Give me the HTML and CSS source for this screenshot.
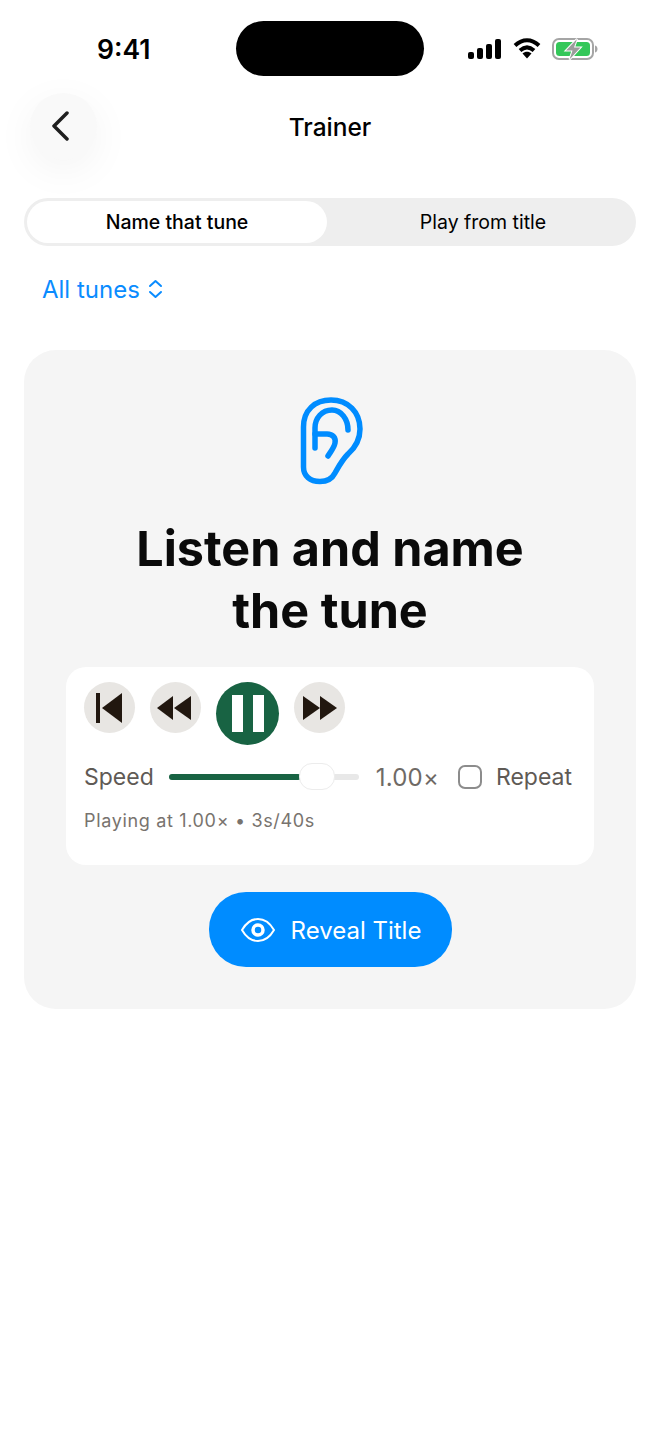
FILE: index.html
```html
<!DOCTYPE html>
<html lang="en">
<head>
    <meta charset="UTF-8">
    <meta name="viewport" content="width=device-width, initial-scale=1.0">
    <title>Trainer</title>
    <link rel="stylesheet" href="styles.css">
</head>
<body>
    <div class="screen">
        <div class="status-bar">
            <span class="clock">9:41</span>
            <div class="island"></div>
            <div class="status-icons">
                <svg width="34" height="20" viewBox="0 0 34 20"><rect x="0" y="13" width="6" height="7" rx="2"/><rect x="9" y="9" width="6" height="11" rx="2"/><rect x="18" y="5" width="6" height="15" rx="2"/><rect x="27" y="0" width="6" height="20" rx="2"/></svg>
                <svg width="28" height="21" viewBox="0 0 28 21"><path d="M2 7.500C9.500 .5 18.500 .5 26 7.500" class="wifi-arc"/><path d="M7 12.500C11.500 8.500 16.500 8.500 21 12.500" class="wifi-arc"/><path d="M9.500 15.500C12 13.200 16 13.200 18.500 15.500L14 20.500Z"/></svg>
                <svg width="46" height="22" viewBox="0 0 46 22">
                    <rect x="1" y="1" width="40" height="20" rx="6" class="batt-shell"/>
                    <path d="M43 7.500c2 .6 2.500 2 2.500 3.500s-.5 2.900-2.500 3.500z" fill="#a5a5a5"/>
                    <rect x="4" y="4" width="34" height="14" rx="3.500" fill="#34c759"/>
                    <path d="M25 1L14 12.500H20.500L17.500 21.500L28.500 9.500H22Z" class="batt-bolt"/>
                </svg>
            </div>
        </div>

        <header class="top-bar">
            <button class="back-btn" type="button">
                <svg width="20" height="30" viewBox="0 0 20 30"><path d="M16 2L3 15L16 28"/></svg>
            </button>
            <h1>Trainer</h1>
        </header>

        <div class="segments">
            <div class="segment active">Name that tune</div>
            <div class="segment">Play from title</div>
        </div>

        <div class="filter">
            All tunes
            <svg width="15" height="20" viewBox="0 0 15 20"><path d="M2 7L7.500 2L13 7M2 13L7.500 18L13 13"/></svg>
        </div>

        <section class="card">
            <svg class="ear" width="64" height="90" viewBox="0 0 64 90">
                <path d="M3.500 30C3.500 13 15 3 31 3C48 3 60 15 60 32C60 42 56 50 48 57C42 63 39 69 35 76C32 82 27 84.500 20 84.500C10 84.500 3.500 79 3.500 70Z"/>
                <path d="M15 51V31C15 21 22 13 32 13C41 13 48 22 48 33"/>
                <path d="M15 37H27C33 37 36 41 35 46C34 51 31 54 28 59"/>
            </svg>
            <h2>Listen and name<br>the tune</h2>

            <div class="player">
                <div class="controls">
                    <button class="ctl" type="button">
                        <svg width="30" height="30" viewBox="0 0 30 30"><rect x="1" y="0" width="4" height="30"/><path d="M27 0V30L7 15Z"/></svg>
                    </button>
                    <button class="ctl back-skip" type="button">
                        <svg width="36" height="26" viewBox="0 0 36 26"><path d="M17 1V25L1 13Z"/><path d="M35 1V25L18 13Z"/></svg>
                    </button>
                    <button class="ctl play" type="button">
                        <svg width="32" height="37" viewBox="0 0 32 37"><rect width="11" height="37"/><rect x="21" width="11" height="37"/></svg>
                    </button>
                    <button class="ctl" type="button">
                        <svg width="36" height="26" viewBox="0 0 36 26"><path d="M1 1V25L18 13Z"/><path d="M18 1V25L35 13Z"/></svg>
                    </button>
                </div>
                <div class="speed-row">
                    <span class="speed-label">Speed</span>
                    <div class="slider">
                        <div class="slider-fill"></div>
                        <div class="slider-thumb"></div>
                    </div>
                    <span class="speed-value">1.00×</span>
                    <span class="checkbox"></span>
                    <span class="speed-label">Repeat</span>
                </div>
                <div class="progress-text">Playing at 1.00× • 3s/40s</div>
            </div>

            <button class="reveal" type="button">
                <svg width="34" height="24" viewBox="0 0 34 24">
                    <path d="M1 12C5 5 11 1 17 1C23 1 29 5 33 12C29 19 23 23 17 23C11 23 5 19 1 12Z" class="eye-line"/>
                    <circle cx="17" cy="12" r="5" class="eye-line eye-iris"/>
                </svg>
                <span class="reveal-text">Reveal Title</span>
            </button>
        </section>
    </div>
</body>
</html>
```

FILE: styles.css
```css
body {
    font-family: Inter, 'Noto Sans', sans-serif;
    background-color: #fff;
    color: #0a0a0a;
    margin: 0;
    padding: 0;
}
button {
    font-family: inherit;
    border: none;
    padding: 0;
    cursor: pointer;
}
.screen {
    width: 660px;
    height: 1434px;
    padding: 21px 24px 0;
    box-sizing: border-box;
    overflow: hidden;
}

/* status bar */
.status-bar {
    display: flex;
    align-items: center;
    height: 55px;
}
.clock {
    width: 212px;
    box-sizing: border-box;
    padding-left: 73px;
    font-size: 26.500px;
    font-weight: 600;
    color: #000;
}
.island {
    width: 188px;
    height: 55px;
    background-color: #000;
    border-radius: 28px;
}
.status-icons {
    display: flex;
    align-items: center;
    gap: 11px;
    margin-left: 44px;
}
.status-icons svg {
    display: block;
}
.wifi-arc {
    fill: none;
    stroke: #000;
    stroke-width: 4;
}
.batt-shell {
    fill: none;
    stroke: #a5a5a5;
    stroke-width: 2;
}
.batt-bolt {
    fill: #9c9c9c;
    stroke: #fff;
    stroke-width: 2;
    paint-order: stroke;
}

/* header */
.top-bar {
    position: relative;
    display: flex;
    align-items: center;
    height: 67px;
    margin-top: 17px;
    padding-left: 6px;
}
.top-bar h1 {
    position: absolute;
    left: 0;
    right: 0;
    margin: 0;
    text-align: center;
    font-size: 24.500px;
    font-weight: 500;
    color: #000;
}
.back-btn {
    display: flex;
    align-items: center;
    justify-content: center;
    width: 67px;
    height: 67px;
    padding-right: 5px;
    padding-bottom: 2px;
    background-color: #f9f9f9;
    border-radius: 50%;
    box-shadow: 0 10px 40px rgba(0, 0, 0, 0.05);
}
.back-btn path {
    fill: none;
    stroke: #1f1f1f;
    stroke-width: 3.500;
    stroke-linecap: round;
    stroke-linejoin: round;
}

/* tabs */
.segments {
    display: flex;
    height: 48px;
    margin-top: 38px;
    padding: 3px;
    box-sizing: border-box;
    background-color: #eeeeee;
    border-radius: 24px;
}
.segment {
    width: 300px;
    display: flex;
    align-items: center;
    justify-content: center;
    border-radius: 21px;
    font-size: 19.500px;
    font-weight: 400;
    color: #000;
}
.segment + .segment {
    width: 306px;
    padding-left: 6px;
    box-sizing: border-box;
}
.segment.active {
    background-color: #fff;
    font-weight: 500;
}

.filter {
    display: flex;
    align-items: center;
    gap: 8px;
    margin-top: 28px;
    padding-left: 18px;
    height: 30px;
    font-size: 24px;
    color: #0a8cff;
}
.filter path {
    fill: none;
    stroke: #0a8cff;
    stroke-width: 2;
    stroke-linecap: round;
    stroke-linejoin: round;
}

/* main card */
.card {
    display: flex;
    flex-direction: column;
    align-items: center;
    height: 659px;
    margin-top: 46px;
    padding-top: 47px;
    box-sizing: border-box;
    background-color: #f5f5f5;
    border-radius: 32px;
}
.ear {
    display: block;
    margin-left: 3px;
}
.ear path {
    fill: none;
    stroke: #008cff;
    stroke-width: 5.500;
    stroke-linecap: round;
    stroke-linejoin: round;
}
.card h2 {
    margin: 31px 0 0;
    text-align: center;
    font-size: 48.500px;
    line-height: 62px;
    font-weight: 700;
    color: #0a0a0a;
}
.player {
    width: 528px;
    height: 198px;
    margin-top: 25px;
    padding: 15px 18px 0;
    box-sizing: border-box;
    background-color: #fff;
    border-radius: 20px;
}
.controls {
    display: flex;
    align-items: flex-start;
    gap: 15px;
}
.ctl {
    display: flex;
    align-items: center;
    justify-content: center;
    width: 51px;
    height: 51px;
    background-color: #e8e6e3;
    border-radius: 50%;
}
.ctl svg {
    fill: #21170f;
}
.back-skip {
    padding-right: 3px;
}
.ctl.play {
    width: 63px;
    height: 63px;
    background-color: #186343;
}
.ctl.play svg {
    fill: #fff;
}
.speed-row {
    display: flex;
    align-items: center;
    height: 28px;
    margin-top: 18px;
    font-size: 23px;
    color: #5f5a55;
}
.speed-label {
    display: block;
}
.slider {
    position: relative;
    width: 190px;
    height: 6px;
    margin-left: 15px;
    background-color: #e8e8e8;
    border-radius: 3px;
}
.slider-fill {
    width: 132px;
    height: 6px;
    background-color: #186343;
    border-radius: 3px;
}
.slider-thumb {
    position: absolute;
    left: 130px;
    top: -11px;
    width: 36px;
    height: 27px;
    box-sizing: border-box;
    background-color: #fff;
    border: 1px solid #ececec;
    border-radius: 13px;
}
.speed-value {
    margin-left: 17px;
    font-size: 24px;
    letter-spacing: 0.2px;
    color: #6f6a65;
}
.checkbox {
    width: 24px;
    height: 24px;
    margin: 0 14px 0 19px;
    box-sizing: border-box;
    border: 2px solid #8c8c8c;
    border-radius: 7px;
}
.progress-text {
    margin-top: 19px;
    font-size: 18px;
    letter-spacing: 0.66px;
    color: #78736e;
}
.reveal {
    display: flex;
    align-items: center;
    justify-content: center;
    gap: 16px;
    width: 243px;
    height: 75px;
    margin-top: 27px;
    padding-left: 2px;
    background-color: #008cff;
    border-radius: 37px;
    font-size: 24px;
    color: #fff;
}
.reveal-text {
    padding-top: 2px;
}
.eye-line {
    fill: none;
    stroke: #fff;
    stroke-width: 2;
}
.eye-iris {
    stroke-width: 3.500;
}
```
